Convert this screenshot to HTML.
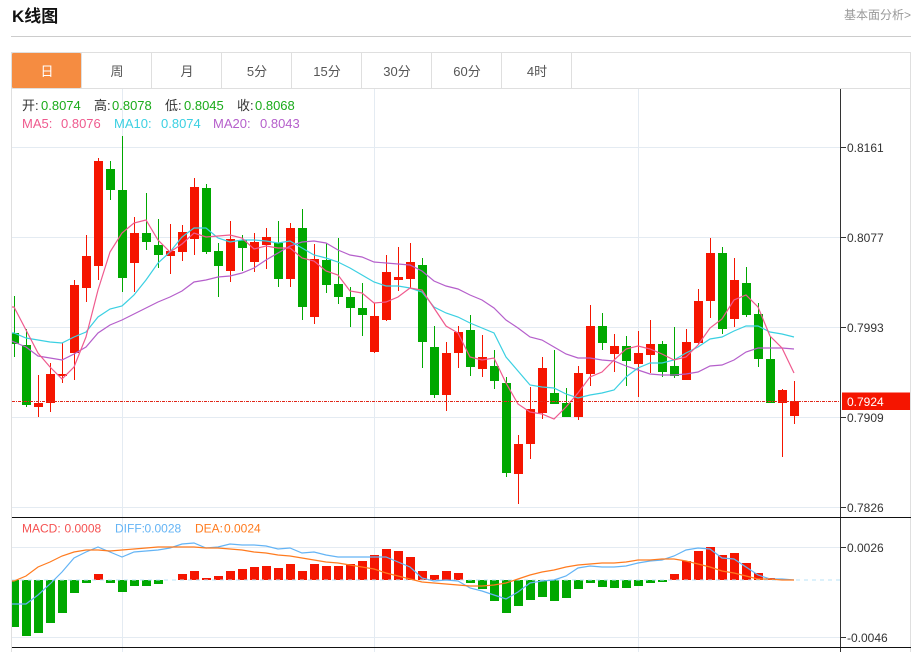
<!DOCTYPE html>
<html lang="zh-CN"><head><meta charset="utf-8"><title>K线图</title>
<style>
html,body{margin:0;padding:0;background:#fff;width:911px;height:652px;overflow:hidden}
svg{display:block;font-family:"Liberation Sans","Noto Sans CJK SC",sans-serif}
</style></head><body>
<svg width="911" height="652" viewBox="0 0 911 652" xmlns="http://www.w3.org/2000/svg">
<defs><clipPath id="c"><rect x="12" y="89" width="828" height="428"/></clipPath><clipPath id="m"><rect x="12" y="518" width="828" height="129"/></clipPath></defs>
<text x="12" y="22" font-size="17" font-weight="bold" fill="#111">K线图</text>
<text x="844" y="19" font-size="12" fill="#999">基本面分析&gt;</text>
<path d="M11 36.5H911" stroke="#ccc" fill="none"/>
<path d="M11 52.5H910.5V652M11.500 52V652M11 88.500H910M81.500 52V88M151.500 52V88M221.500 52V88M291.500 52V88M361.500 52V88M431.500 52V88M501.500 52V88M571.500 52V88" stroke="#dfdfdf" fill="none"/>
<rect x="12" y="53" width="69" height="35" rx="1" fill="#f58c41"/>
<g font-size="13" fill="#555" text-anchor="middle">
<text x="47" y="76" fill="#fff">日</text><text x="117" y="76">周</text><text x="187" y="76">月</text><text x="257" y="76">5分</text><text x="327" y="76">15分</text><text x="397" y="76">30分</text><text x="467" y="76">60分</text><text x="537" y="76">4时</text>
</g>
<path d="M12 147.500H840M12 237.500H840M12 327.500H840M12 417.500H840M12 507.500H840M12 547.500H840M12 637.500H840M122.500 89V652M374.500 89V652M638.500 89V652" stroke="#e4ebf2" fill="none"/>
<g clip-path="url(#c)">
<path fill="none" stroke="#f51500" d="M38.500 375V417M50.500 363V412M62.500 343V383M74.500 280V380M86.500 235V302M98.500 158V280M134.500 217V292M170.500 224V274M182.500 225V261M194.500 178V255M230.500 221V282M254.500 233V272M266.500 228V269M290.500 223V287M314.500 244V324M374.500 303V353M386.500 255V321M398.500 247V291M410.500 243V288M446.500 342V411M458.500 326V368M482.500 335V377M518.500 435V504M530.500 387V459M542.500 357V419M578.500 366V420M590.500 305V386M614.500 334V372M638.500 331V397M650.500 320V373M686.500 329V380M698.500 289V345M710.500 238V318M734.500 258V327M782.500 389V457M794.500 381V424"/>
<path fill="none" stroke="#00a800" d="M14.500 296V357M26.500 329V407M110.500 161V200M122.500 136V292M146.500 193V250M158.500 219V268M206.500 184V254M218.500 243V297M242.500 235V271M278.500 221V287M302.500 209V320M326.500 243V293M338.500 238V304M350.500 287V327M362.500 283V336M422.500 258V368M434.500 326V398M470.500 315V376M494.500 350V389M506.500 377V477M554.500 350V404M566.500 388V417M602.500 313V350M626.500 336V386M662.500 341V377M674.500 327V378M722.500 247V334M746.500 267V317M758.500 303V367M770.500 337V403"/>
<path fill="#f51500" d="M34 403h9V407h-9zM46 374h9V403h-9zM58 374h9V376h-9zM70 285h9V353h-9zM82 256h9V288h-9zM94 161h9V266h-9zM130 233h9V263h-9zM166 251h9V256h-9zM178 232h9V252h-9zM190 187h9V239h-9zM226 239h9V271h-9zM250 242h9V262h-9zM262 237h9V245h-9zM286 228h9V279h-9zM310 259h9V317h-9zM370 316h9V352h-9zM382 272h9V320h-9zM394 277h9V280h-9zM406 262h9V279h-9zM442 353h9V395h-9zM454 332h9V353h-9zM478 357h9V369h-9zM514 444h9V474h-9zM526 409h9V444h-9zM538 368h9V413h-9zM574 373h9V417h-9zM586 326h9V374h-9zM610 346h9V354h-9zM634 353h9V364h-9zM646 344h9V355h-9zM682 342h9V380h-9zM694 301h9V343h-9zM706 253h9V301h-9zM730 280h9V319h-9zM778 390h9V403h-9zM790 401h9V416h-9z"/>
<path fill="#00a800" d="M10 333h9V344h-9zM22 345h9V405h-9zM106 169h9V190h-9zM118 190h9V278h-9zM142 233h9V242h-9zM154 245h9V255h-9zM202 188h9V252h-9zM214 251h9V266h-9zM238 240h9V248h-9zM274 243h9V279h-9zM298 228h9V307h-9zM322 260h9V285h-9zM334 284h9V297h-9zM346 297h9V308h-9zM358 308h9V315h-9zM418 265h9V342h-9zM430 347h9V395h-9zM466 330h9V367h-9zM490 366h9V381h-9zM502 383h9V473h-9zM550 393h9V404h-9zM562 403h9V417h-9zM598 326h9V343h-9zM622 346h9V361h-9zM658 344h9V372h-9zM670 366h9V376h-9zM718 253h9V329h-9zM742 283h9V315h-9zM754 314h9V359h-9zM766 359h9V403h-9z"/>
<polyline fill="none" stroke="#b55fcb" stroke-width="1.200" points="12,341 14,342 26,347 38,356 50,358 62,360 74,354 86,347 98,333 110,325 122,320 134,314 146,308 158,302 170,297 182,291 194,282 206,280 218,277 230,276 242,273 254,268 266,260 278,253 290,246 302,242 314,241 326,243 338,250 350,255 362,257 374,262 386,263 398,264 410,265 422,271 434,281 446,286 458,289 470,295 482,300 494,308 506,320 518,328 530,337 542,340 554,347 566,354 578,358 590,358 602,360 614,361 626,366 638,370 650,374 662,375 674,375 686,374 698,372 710,366 722,365 734,360 746,352 758,348 770,348 782,348 794,349"/>
<polyline fill="none" stroke="#3bd0e2" stroke-width="1.200" points="12,333 14,333 26,338 38,340 50,342 62,343 74,337 86,332 98,317 110,309 122,306 134,295 146,280 158,263 170,252 182,237 194,228 206,228 218,238 230,242 242,240 254,240 266,241 278,243 290,241 302,248 314,255 326,258 338,262 350,268 362,275 374,282 386,286 398,286 410,288 422,292 434,307 446,313 458,317 470,323 482,328 494,333 506,357 518,371 530,385 542,387 554,388 566,394 578,398 590,395 602,393 614,390 626,377 638,368 650,363 662,363 674,360 686,353 698,347 710,339 722,337 734,331 746,326 758,326 770,332 782,334 794,337"/>
<polyline fill="none" stroke="#ef5a8e" stroke-width="1.200" points="12,307 14,307 26,330 38,353 50,367 62,379 74,367 86,337 98,290 110,252 122,233 134,223 146,220 158,240 170,252 182,244 194,233 206,237 218,236 230,235 242,238 254,249 266,246 278,248 290,248 302,258 314,261 326,271 338,275 350,291 362,293 374,303 386,302 398,297 410,288 422,290 434,308 446,326 458,333 470,357 482,360 494,358 506,383 518,404 530,412 542,414 554,419 566,407 578,393 590,377 602,372 614,360 626,349 638,346 650,349 662,354 674,360 686,357 698,345 710,328 722,319 734,300 746,295 758,307 770,336 782,348 794,373"/>
</g>
<path d="M12 401.500H840" stroke="#e0281a" stroke-dasharray="3 1 1 1" fill="none"/>
<g clip-path="url(#m)">
<path fill="#f51500" d="M94 574h9V580h-9zM178 574h9V580h-9zM190 571h9V580h-9zM202 578h9V580h-9zM214 576h9V580h-9zM226 571h9V580h-9zM238 569h9V580h-9zM250 567h9V580h-9zM262 566h9V580h-9zM274 568h9V580h-9zM286 564h9V580h-9zM298 571h9V580h-9zM310 564h9V580h-9zM322 566h9V580h-9zM334 566h9V580h-9zM346 564h9V580h-9zM358 561h9V580h-9zM370 555h9V580h-9zM382 549h9V580h-9zM394 551h9V580h-9zM406 557h9V580h-9zM418 571h9V580h-9zM430 575h9V580h-9zM442 571h9V580h-9zM454 573h9V580h-9zM670 574h9V580h-9zM682 561h9V580h-9zM694 551h9V580h-9zM706 547h9V580h-9zM718 555h9V580h-9zM730 553h9V580h-9zM742 563h9V580h-9zM754 573h9V580h-9zM766 578h9V580h-9zM778 579h9V580h-9z"/>
<path fill="#00a800" d="M10 580h9V627h-9zM22 580h9V636h-9zM34 580h9V633h-9zM46 580h9V623h-9zM58 580h9V613h-9zM70 580h9V593h-9zM82 580h9V583h-9zM106 580h9V583h-9zM118 580h9V592h-9zM130 580h9V586h-9zM142 580h9V586h-9zM154 580h9V584h-9zM466 580h9V583h-9zM478 580h9V589h-9zM490 580h9V601h-9zM502 580h9V613h-9zM514 580h9V606h-9zM526 580h9V600h-9zM538 580h9V597h-9zM550 580h9V601h-9zM562 580h9V598h-9zM574 580h9V589h-9zM586 580h9V583h-9zM598 580h9V587h-9zM610 580h9V588h-9zM622 580h9V588h-9zM634 580h9V586h-9zM646 580h9V583h-9zM658 580h9V582h-9z"/>
<path d="M12 580H840" stroke="#b9e3f7" stroke-dasharray="4 4" fill="none"/>
<polyline fill="none" stroke="#64b4f5" stroke-width="1.200" points="12,604 14,604 26,604 38,595 50,584 62,572 74,558 86,552 98,547 110,552 122,557 134,552 146,551 158,550 170,548 182,544 194,543 206,548 218,547 230,544 242,545 254,545 266,546 278,549 290,548 302,553 314,552 326,555 338,557 350,557 362,557 374,557 386,557 398,562 410,567 422,578 434,581 446,580 458,581 470,588 482,591 494,595 506,599 518,592 530,583 542,581 554,580 566,576 578,568 590,566 602,567 614,567 626,566 638,563 650,561 662,560 674,556 686,550 698,548 710,549 722,558 734,559 746,567 758,575 770,579 782,579 794,580"/>
<polyline fill="none" stroke="#ff7b1f" stroke-width="1.200" points="12,581 14,581 26,576 38,567 50,562 62,556 74,552 86,550 98,550 110,551 122,550 134,549 146,548 158,547 170,547 182,547 194,547 206,548 218,548 230,549 242,550 254,552 266,553 278,555 290,556 302,558 314,560 326,562 338,563 350,565 362,567 374,569 386,573 398,576 410,579 422,582 434,583 446,584 458,585 470,586 482,586 494,585 506,583 518,579 530,575 542,572 554,570 566,567 578,565 590,564 602,563 614,563 626,562 638,560 650,560 662,559 674,559 686,561 698,564 710,567 722,571 734,573 746,576 758,579 770,579 782,580 794,580"/>
</g>
<path d="M840.500 89V652M840 147.500H846M840 237.500H846M840 327.500H846M840 417.500H846M840 507.500H846M840 547.500H846M840 637.500H846" stroke="#333" fill="none"/>
<path d="M12 517.500H911M12 647.500H911" stroke="#111" fill="none"/>
<rect x="842" y="392.500" width="68" height="17.500" fill="#f51500"/>
<g font-size="12" fill="#333">
<text x="847" y="152">0.8161</text><text x="847" y="242">0.8077</text><text x="847" y="332">0.7993</text><text x="847" y="422">0.7909</text><text x="847" y="512">0.7826</text><text x="847" y="406" fill="#fff">0.7924</text><text x="847" y="552">0.0026</text><text x="847" y="642">-0.0046</text>
</g>
<g font-size="13">
<g fill="#333"><text x="22" y="110">开:</text><text x="94" y="110">高:</text><text x="165" y="110">低:</text><text x="237" y="110">收:</text></g>
<g fill="#1aab1a"><text x="41" y="110">0.8074</text><text x="112" y="110">0.8078</text><text x="184" y="110">0.8045</text><text x="255" y="110">0.8068</text></g>
<g fill="#ef5a8e"><text x="22" y="128">MA5:</text><text x="61" y="128">0.8076</text></g>
<g fill="#3bd0e2"><text x="114" y="128">MA10:</text><text x="161" y="128">0.8074</text></g>
<g fill="#b55fcb"><text x="213" y="128">MA20:</text><text x="260" y="128">0.8043</text></g>
</g>
<g font-size="12">
<g fill="#f55252"><text x="22" y="532.500">MACD:</text><text x="64.500" y="532.500">0.0008</text></g>
<g fill="#64b4f5"><text x="115" y="532.500">DIFF:</text><text x="144.500" y="532.500">0.0028</text></g>
<g fill="#ff7b1f"><text x="195" y="532.500">DEA:</text><text x="224" y="532.500">0.0024</text></g>
</g>
</svg>
</body></html>
